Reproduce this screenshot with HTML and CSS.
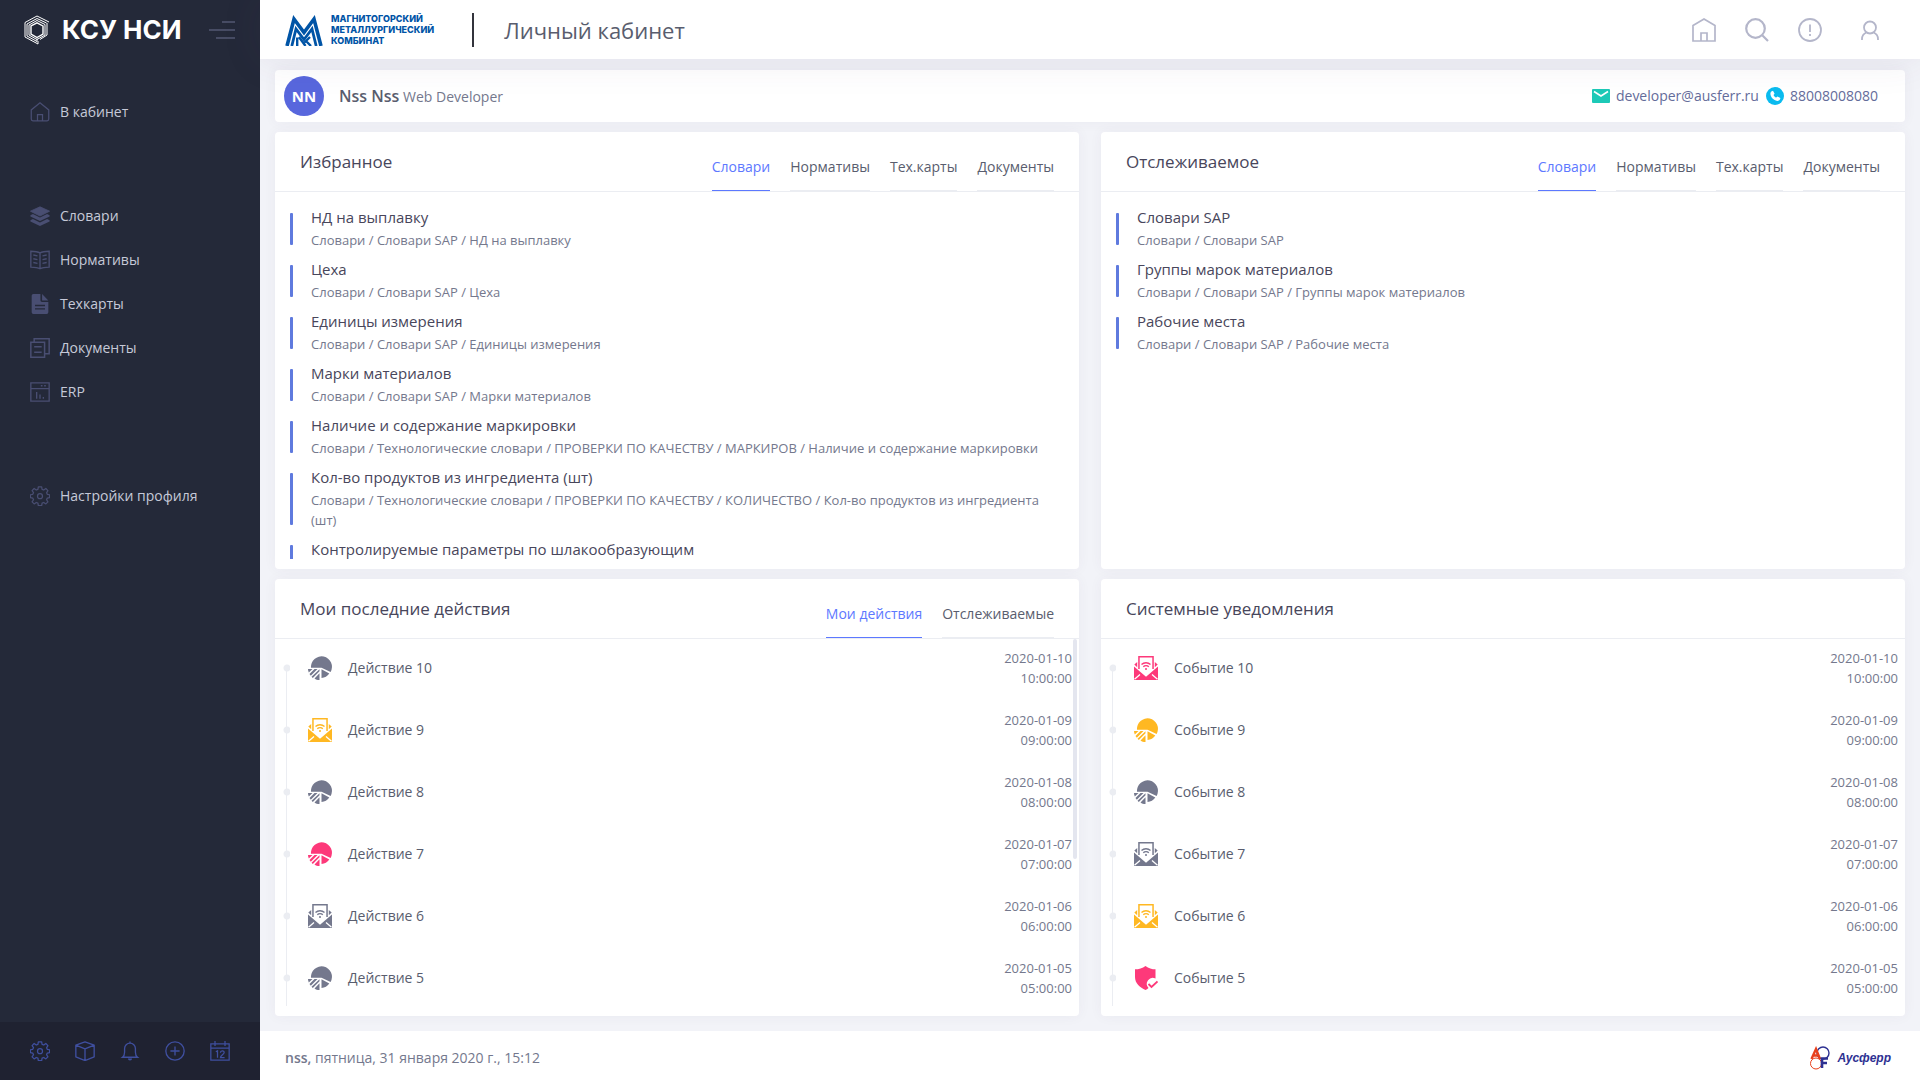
FILE: index.html
```
<!DOCTYPE html>
<html lang="ru">
<head>
<meta charset="utf-8">
<meta name="viewport" content="width=device-width, initial-scale=1">
<title>Личный кабинет</title>
<link rel="stylesheet" href="styles.css">
</head>
<body>
<svg class="sprite" aria-hidden="true">
  <symbol id="i-home" viewBox="0 0 24 24"><path d="M1 23V7.500L12 1l11 6.500V23zM9 23v-8h6v8" fill="none" stroke="currentColor" stroke-width="1.700"/></symbol>
  <symbol id="i-home-round" viewBox="0 0 24 24"><path d="M1.500 20.500V9.500L12 1l10.500 8.500v11a2 2 0 0 1-2 2h-17a2 2 0 0 1-2-2zM9 22.500V15h6v7.500" fill="none" stroke="currentColor" stroke-width="1.500"/></symbol>
  <symbol id="i-layers" viewBox="0 0 24 24"><g fill="currentColor"><path d="M12 1l11.500 5.200L12 12 .5 6.200z" stroke="currentColor" stroke-linejoin="round"/><path d="M.5 11l3-1.300L12 13.800l8.500-4.100 3 1.300v1.500L12 18 .5 12.500z"/><path d="M.5 17l3-1.300 8.500 4.100 8.500-4.100 3 1.300v1.500L12 24 .5 18.500z"/></g></symbol>
  <symbol id="i-book" viewBox="0 0 24 24"><g fill="none" stroke="currentColor" stroke-width="1.600"><path d="M12 3.500C9.500 2 6 1.500 1 1.500v19c5 0 8.500.5 11 2 2.500-1.500 6-2 11-2v-19c-5 0-8.500.5-11 2zM12 3.500v19"/><path d="M4 6l5 1M4 10.500l5 1M4 15l5 1M20 6l-5 1M20 10.500l-5 1M20 15l-5 1"/></g></symbol>
  <symbol id="i-file" viewBox="0 0 24 24"><path fill="currentColor" fill-rule="evenodd" d="M4 0h8.500v7.500A2 2 0 0 0 14.500 9.500H22V22a2 2 0 0 1-2 2H4a2 2 0 0 1-2-2V2a2 2 0 0 1 2-2zM6 13v1.700h12V13zm0 4v1.700h12V17zM14.500 0L22 7.700h-7.500z"/></symbol>
  <symbol id="i-docs" viewBox="0 0 24 24"><path d="M1 5h16.500v18H1zM5 5V1h18v18h-5.500M5 10.500h9M5 17h9" fill="none" stroke="currentColor" stroke-width="1.800"/></symbol>
  <symbol id="i-erp" viewBox="0 0 24 24"><path d="M1 1h22v22H1zM1 8h22M8 12v8M12 15v5M16 18v2M13 4.500h2M17 4.500h2" fill="none" stroke="currentColor" stroke-width="1.600"/></symbol>
  <symbol id="i-gear" viewBox="0 0 24 24"><g fill="none" stroke="currentColor" stroke-width="1.500" stroke-linejoin="round"><path d="M10 1h4l.5 3 2 .8L19 3l2.500 2.500-1.600 2.700.8 1.800 2.800.5v3.500l-2.800.5-.8 2 1.600 2.500L19 21.500l-2.500-1.700-2 .8L14 23.500h-4l-.5-2.900-2-.8L5 21.500 2.500 19l1.700-2.500-.9-2L.5 14v-3.500l2.800-.5.9-2-1.700-2.500L5 3l2.500 1.800 2-.8z"/><circle cx="12" cy="12.200" r="3"/></g></symbol>
  <symbol id="i-box" viewBox="0 0 24 24"><path d="M12 1l11 4v14l-11 4.500L1 19V5zM1 5l11 4.500L23 5M12 9.500v14" fill="none" stroke="currentColor" stroke-width="1.600" stroke-linejoin="round"/></symbol>
  <symbol id="i-bell" viewBox="0 0 24 24"><path d="M12 .5v2M3 19.500c2-1.500 2.500-3 2.500-6V9a6.500 6.500 0 0 1 13 0v4.500c0 3 .5 4.500 2.500 6z" fill="none" stroke="currentColor" stroke-width="1.600"/><path d="M9.500 21h5a2.500 2.500 0 0 1-5 0z" fill="currentColor"/></symbol>
  <symbol id="i-plus" viewBox="0 0 24 24"><path d="M12 6.500v11M6.500 12h11M12 1a11 11 0 1 1 0 22 11 11 0 0 1 0-22z" fill="none" stroke="currentColor" stroke-width="1.600"/></symbol>
  <symbol id="i-calendar" viewBox="0 0 24 24"><path d="M1 3.500h22V23H1zM1 8.500h22M6 0v6M18 0v6M7 13l2-1.200V20M12.500 14c0-3 4.500-3 4.500-.2 0 2-4.500 3.700-4.500 6.200H17.500" fill="none" stroke="currentColor" stroke-width="1.500"/></symbol>
  <symbol id="i-search" viewBox="0 0 24 24"><path d="M10.500 1.200a9.300 9.300 0 1 1 0 18.600 9.300 9.300 0 0 1 0-18.600zM17 17l6 6" fill="none" stroke="currentColor" stroke-width="2.200"/></symbol>
  <symbol id="i-alert" viewBox="0 0 24 24"><path d="M12 1a11 11 0 1 1 0 22 11 11 0 0 1 0-22zM12 6.500v7.500M12 16v2" fill="none" stroke="currentColor" stroke-width="1.800"/></symbol>
  <symbol id="i-user" viewBox="0 0 24 24"><path d="M12 3.500a6 6 0 1 1 0 12 6 6 0 0 1 0-12zM4 22v-1a7 7 0 0 1 4.500-6.500M20 22v-1a7 7 0 0 0-4.500-6.500" fill="none" stroke="currentColor" stroke-width="1.800"/></symbol>
  <symbol id="i-mail" viewBox="0 0 18 14"><rect width="18" height="14" rx="1" fill="#1dc9b7"/><path d="M2 2.500l7 4.500 7-4.500" fill="none" stroke="#fff" stroke-width="1.600"/></symbol>
  <symbol id="i-phone" viewBox="0 0 18 18"><circle cx="9" cy="9" r="9" fill="#0abbef"/><path d="M5.300 4.500l1.700-.8 1.600 3-1.100 1.200c.5 1.200 1.400 2.100 2.700 2.600l1.200-1.100 3 1.600c-.2 1.800-1.500 3-3.200 2.900C7.600 13.400 4.600 10.300 4.400 6.500c0-.8.300-1.500.9-2z" fill="#fff"/></symbol>
  <symbol id="i-chart" viewBox="0 0 24 24"><g fill="currentColor"><path d="M3 11.700A10.500 10.500 0 1 1 22.600 16L13.500 11.700z"/><path d="M13.500 13.300l7.800 4.200A10.500 10.500 0 0 1 13.500 22z"/><path d="M0 13h4.500L.8 16.600A10 10 0 0 1 0 13zM6.500 13h3L2.800 19.700 1.500 18zM11.500 13.200v2L4.800 21.900 3.500 20.700zM11.500 17.200V24c-2 0-3.600-.5-5-1.500z"/></g></symbol>
  <symbol id="i-letter" viewBox="0 0 24 24"><g fill="currentColor"><path d="M4.200 0h15.600v13h-1.500V1.500H5.700V13H4.200z"/><path d="M.3 8.600L3.200 6v5.200zM23.700 8.600L20.800 6v5.200zM0 10.500l12 10.300 12-10.300V24H0z"/></g><path d="M.5 23.200l5.500-4.700M23.500 23.200L18 18.500" stroke="#fff" stroke-width="1.300"/><path d="M7.500 8.500c2.500-2.300 6.500-2.300 9 0M9.300 10.800c1.500-1.400 4-1.400 5.500 0" fill="none" stroke="currentColor" stroke-width="1.400"/><circle cx="12" cy="13" r="1" fill="currentColor"/></symbol>
  <symbol id="i-shield" viewBox="0 0 24 24"><path d="M11.500 0c3 2.500 6.500 3.300 10 3.300v9.200a6 6 0 0 0-7 9.500c-1 .9-2 1.500-3 2C6 21.500 1 17.500 1 11V3.300C4.800 3.300 8.500 2.500 11.500 0z" fill="currentColor"/><path d="M14.500 18l3 3 6-5.500" fill="none" stroke="currentColor" stroke-width="1.800"/></symbol>
</svg>

<div class="app">
  <aside class="sidebar">
    <div class="brand">
      <a class="brand-link" href="#">
        <svg class="brand-mark" viewBox="0 0 26 30" aria-hidden="true"><g fill="none" stroke="#fff"><path d="M25 7L13 1 1 7.500V22l13 7v-3"/><path d="M22.500 8L13 3.500 3 9v12l10 5.500v-3" /><path d="M23 8v12l-7 4.500" /><path d="M21 9.500L13 5.500 5 10v10l8 4.500 8-4.500z"/><path d="M19 11l-6-3.200L7 11v8l6 3.500 6-3.500z" stroke-width="1.400"/></g></svg>
        <span class="brand-name">КСУ НСИ</span>
      </a>
      <button class="toggle" type="button" aria-label="Свернуть меню"><span></span><span></span><span></span></button>
    </div>
    <nav class="menu">
      <ul class="menu-group">
        <li><a href="#"><svg><use href="#i-home-round"/></svg>В кабинет</a></li>
      </ul>
      <ul class="menu-group">
        <li><a href="#"><svg><use href="#i-layers"/></svg>Словари</a></li>
        <li><a href="#"><svg><use href="#i-book"/></svg>Нормативы</a></li>
        <li><a href="#"><svg><use href="#i-file"/></svg>Техкарты</a></li>
        <li><a href="#"><svg><use href="#i-docs"/></svg>Документы</a></li>
        <li><a href="#"><svg><use href="#i-erp"/></svg>ERP</a></li>
      </ul>
      <ul class="menu-group">
        <li><a href="#"><svg><use href="#i-gear"/></svg>Настройки профиля</a></li>
      </ul>
    </nav>
    <div class="shortcuts">
      <button type="button" aria-label="Настройки"><svg><use href="#i-gear"/></svg></button>
      <button type="button" aria-label="Пакеты"><svg><use href="#i-box"/></svg></button>
      <button type="button" aria-label="Уведомления"><svg><use href="#i-bell"/></svg></button>
      <button type="button" aria-label="Добавить"><svg><use href="#i-plus"/></svg></button>
      <button type="button" aria-label="Календарь"><svg><use href="#i-calendar"/></svg></button>
    </div>
  </aside>

  <div class="page">
    <header class="topbar">
      <a class="company" href="#">
        <svg class="company-mark" viewBox="0 0 38 32" aria-hidden="true"><g fill="none" stroke="#0054a6"><path d="M2 32L9 5l10 13.500L29 5l7 27" stroke-width="3.600"/><path d="M6.800 32L11 15l8 10.500L27 15l4.200 17" stroke-width="2.800"/><path d="M12.200 32v-8.500M14 23l6.500 9M25 23l-5.500 5.500M21 27l5 5" stroke-width="2.400"/></g></svg>
        <span class="company-name">Магнитогорский<br>металлургический<br>комбинат</span>
      </a>
      <h1 class="page-title">Личный кабинет</h1>
      <div class="tools">
        <button type="button" aria-label="Домой"><svg><use href="#i-home"/></svg></button>
        <button type="button" aria-label="Поиск"><svg><use href="#i-search"/></svg></button>
        <button type="button" aria-label="Сообщения"><svg><use href="#i-alert"/></svg></button>
        <button class="tool-user" type="button" aria-label="Профиль"><svg><use href="#i-user"/></svg></button>
      </div>
    </header>

    <main class="content">
      <section class="card profile">
        <span class="avatar">NN</span>
        <p class="person"><strong>Nss Nss</strong> Web Developer</p>
        <div class="contacts">
          <a href="mailto:developer@ausferr.ru"><svg class="mail"><use href="#i-mail"/></svg>developer@ausferr.ru</a>
          <a href="tel:88008008080"><svg><use href="#i-phone"/></svg>88008008080</a>
        </div>
      </section>

      <div class="board">
        <section class="card panel">
          <header class="panel-head">
            <h2>Избранное</h2>
            <div class="tabs" role="tablist">
              <button role="tab" aria-selected="true">Словари</button>
              <button role="tab" aria-selected="false">Нормативы</button>
              <button role="tab" aria-selected="false">Тех.карты</button>
              <button role="tab" aria-selected="false">Документы</button>
            </div>
          </header>
          <ul class="links">
            <li><div><a href="#">НД на выплавку</a><p>Словари / Словари SAP / НД на выплавку</p></div></li>
            <li><div><a href="#">Цеха</a><p>Словари / Словари SAP / Цеха</p></div></li>
            <li><div><a href="#">Единицы измерения</a><p>Словари / Словари SAP / Единицы измерения</p></div></li>
            <li><div><a href="#">Марки материалов</a><p>Словари / Словари SAP / Марки материалов</p></div></li>
            <li><div><a href="#">Наличие и содержание маркировки</a><p>Словари / Технологические словари / ПРОВЕРКИ ПО КАЧЕСТВУ / МАРКИРОВ / Наличие и содержание маркировки</p></div></li>
            <li><div><a href="#">Кол-во продуктов из ингредиента (шт)</a><p>Словари / Технологические словари / ПРОВЕРКИ ПО КАЧЕСТВУ / КОЛИЧЕСТВО / Кол-во продуктов из ингредиента (шт)</p></div></li>
            <li><div><a href="#">Контролируемые параметры по шлакообразующим</a></div></li>
          </ul>
        </section>

        <section class="card panel">
          <header class="panel-head">
            <h2>Отслеживаемое</h2>
            <div class="tabs" role="tablist">
              <button role="tab" aria-selected="true">Словари</button>
              <button role="tab" aria-selected="false">Нормативы</button>
              <button role="tab" aria-selected="false">Тех.карты</button>
              <button role="tab" aria-selected="false">Документы</button>
            </div>
          </header>
          <ul class="links">
            <li><div><a href="#">Словари SAP</a><p>Словари / Словари SAP</p></div></li>
            <li><div><a href="#">Группы марок материалов</a><p>Словари / Словари SAP / Группы марок материалов</p></div></li>
            <li><div><a href="#">Рабочие места</a><p>Словари / Словари SAP / Рабочие места</p></div></li>
          </ul>
        </section>

        <section class="card panel">
          <header class="panel-head">
            <h2>Мои последние действия</h2>
            <div class="tabs" role="tablist">
              <button role="tab" aria-selected="true">Мои действия</button>
              <button role="tab" aria-selected="false">Отслеживаемые</button>
            </div>
          </header>
          <ol class="timeline">
            <li><i class="marker"></i><svg class="grey"><use href="#i-chart"/></svg><span>Действие 10</span><time>2020-01-10<br>10:00:00</time></li>
            <li><i class="marker"></i><svg class="amber"><use href="#i-letter"/></svg><span>Действие 9</span><time>2020-01-09<br>09:00:00</time></li>
            <li><i class="marker"></i><svg class="grey"><use href="#i-chart"/></svg><span>Действие 8</span><time>2020-01-08<br>08:00:00</time></li>
            <li><i class="marker"></i><svg class="red"><use href="#i-chart"/></svg><span>Действие 7</span><time>2020-01-07<br>07:00:00</time></li>
            <li><i class="marker"></i><svg class="grey"><use href="#i-letter"/></svg><span>Действие 6</span><time>2020-01-06<br>06:00:00</time></li>
            <li><i class="marker"></i><svg class="grey"><use href="#i-chart"/></svg><span>Действие 5</span><time>2020-01-05<br>05:00:00</time></li>
          </ol>
          <div class="scroll-track"><div class="scroll-thumb"></div></div>
        </section>

        <section class="card panel">
          <header class="panel-head">
            <h2>Системные уведомления</h2>
          </header>
          <ol class="timeline">
            <li><i class="marker"></i><svg class="red"><use href="#i-letter"/></svg><span>Событие 10</span><time>2020-01-10<br>10:00:00</time></li>
            <li><i class="marker"></i><svg class="amber"><use href="#i-chart"/></svg><span>Событие 9</span><time>2020-01-09<br>09:00:00</time></li>
            <li><i class="marker"></i><svg class="grey"><use href="#i-chart"/></svg><span>Событие 8</span><time>2020-01-08<br>08:00:00</time></li>
            <li><i class="marker"></i><svg class="grey"><use href="#i-letter"/></svg><span>Событие 7</span><time>2020-01-07<br>07:00:00</time></li>
            <li><i class="marker"></i><svg class="amber"><use href="#i-letter"/></svg><span>Событие 6</span><time>2020-01-06<br>06:00:00</time></li>
            <li><i class="marker"></i><svg class="red"><use href="#i-shield"/></svg><span>Событие 5</span><time>2020-01-05<br>05:00:00</time></li>
          </ol>
        </section>
      </div>
    </main>

    <footer class="footer">
      <p><strong>nss,</strong> пятница, 31 января 2020 г., 15:12</p>
      <a class="vendor" href="#">
        <svg viewBox="0 0 20 24" aria-hidden="true"><circle cx="13" cy="7" r="6" fill="none" stroke="#2e3192" stroke-width="1.400"/><circle cx="6" cy="17.500" r="5.500" fill="#fff" stroke="#e8401c"/><path d="M1.500 13L6 3l4 10M3.500 9.500h5" fill="none" stroke="#e8401c" stroke-width="2.400"/><path d="M12 22V12.500h6M12 17h5" fill="none" stroke="#2e3192" stroke-width="2.600"/></svg>
        <span>Аусферр</span>
      </a>
    </footer>
  </div>
</div>
</body>
</html>
```
FILE: styles.css
```
*, *::before, *::after { box-sizing: border-box; }

body {
  margin: 0;
  font: 400 14px/20px "Open Sans", "Noto Sans", sans-serif;
  color: #646c9a;
  background: #f2f3f8;
}

h1, h2, p, ul, ol { margin: 0; padding: 0; font-weight: 400; }
ul, ol { list-style: none; }
a { color: inherit; text-decoration: none; }
button { margin: 0; padding: 0; border: 0; background: none; font: inherit; color: inherit; cursor: pointer; }
svg { display: block; flex: none; }
.sprite { display: none; }

.app { display: grid; grid-template: minmax(0, 1fr) / 260px minmax(0, 1fr); height: 100vh; }

/* Sidebar */
.sidebar { display: flex; flex-direction: column; background: #242939; color: #c6c9d8; }
.brand { display: flex; align-items: center; justify-content: space-between; height: 60px; padding: 0 25px 0 24px; }
.brand-link { display: flex; align-items: center; gap: 12px; }
.brand-mark { width: 26px; height: 30px; }
.brand-name { font: 700 26px/30px "Inter", "Open Sans", sans-serif; color: #fff; }
.toggle { display: flex; flex-direction: column; align-items: flex-end; gap: 6px; width: 26px; }
.toggle span { height: 2px; width: 13px; background: #474c64; }
.toggle span:nth-child(2) { width: 26px; }
.toggle span:nth-child(3) { width: 19px; }

.menu { display: flex; flex-direction: column; flex: 1; gap: 60px; padding-top: 30px; }
.menu a { display: flex; align-items: center; gap: 10px; height: 44px; padding: 0 30px; }
.menu svg { width: 20px; height: 20px; color: #494e72; }

.shortcuts { display: flex; align-items: center; gap: 25px; height: 58px; padding: 0 30px; background: #1f2231; color: #3f4f9f; }
.shortcuts svg { width: 20px; height: 20px; }

/* Top bar */
.page { display: flex; flex-direction: column; min-width: 0; min-height: 0; }
.topbar { display: flex; align-items: center; height: 59px; flex: none; padding: 0 38px 0 25px; background: #fff; box-shadow: 0 0 40px rgba(82, 63, 105, .1); position: relative; z-index: 1; }
.company { display: flex; align-items: center; gap: 8px; }
.company-mark { width: 38px; height: 32px; }
.company-name { font: 800 9px/11px "Inter", "Open Sans", sans-serif; text-transform: uppercase; color: #0054a6; }
.page-title { margin-left: 38px; padding-left: 30px; border-left: 2px solid #33343c; font-size: 22px; line-height: 34px; color: #595d6e; }
.tools { display: flex; align-items: center; gap: 29px; margin-left: auto; color: #b4b6ca; }
.tools svg { width: 24px; height: 24px; }
.tool-user { margin-left: 7px; }

/* Content */
.content { display: flex; flex-direction: column; flex: 1; gap: 10px; min-height: 0; padding: 11px 15px 15px; }
.card { background: #fff; border-radius: 4px; box-shadow: 0 0 13px rgba(82, 63, 105, .05); }

.profile { display: flex; align-items: center; height: 52px; flex: none; padding: 0 27px 0 9px; }
.avatar { width: 40px; height: 40px; border-radius: 50%; background: #5867dd; color: #fff; font-size: 15px; font-weight: 700; line-height: 40px; text-align: center; }
.person { margin-left: 15px; color: #74788d; }
.person strong { font-size: 16px; font-weight: 600; color: #595d6e; }
.contacts { display: flex; gap: 7px; margin-left: auto; }
.contacts a { display: flex; align-items: center; gap: 6px; }
.contacts svg { width: 18px; height: 18px; }
.contacts .mail { height: 14px; }

.board { display: grid; grid-template: repeat(2, minmax(0, 1fr)) / repeat(2, minmax(0, 1fr)); flex: 1; gap: 10px 22px; min-height: 0; }
.panel { position: relative; display: flex; flex-direction: column; min-height: 0; }
.panel-head { display: flex; justify-content: space-between; height: 60px; flex: none; padding: 0 25px; border-bottom: 1px solid #ebedf2; }
.panel-head h2 { font-size: 17px; font-weight: 500; line-height: 60px; color: #48465b; }
.tabs { display: flex; gap: 20px; color: #595d6e; }
.tabs button { padding-top: 12px; border-bottom: 1px solid #ebedf2; }
.tabs [aria-selected="true"] { color: #5d78ff; border-color: #5d78ff; }

/* Bookmarked entries */
.links { display: flex; flex-direction: column; flex: 1; gap: 8px; min-height: 0; margin-bottom: 10px; padding: 14px 20px 0 15px; overflow: hidden; }
.links li { display: flex; flex: none; gap: 18px; min-height: 44px; }
.links li::before { content: ""; width: 3px; margin: 7px 0 5px; border-radius: 1px; background: #5f7ade; }
.links li div { flex: 1; min-width: 0; }
.links a { display: block; margin-bottom: 2px; font-size: 15px; font-weight: 500; line-height: 22px; color: #48465b; }
.links p { font-size: 13px; color: #74788d; }

/* Event feeds */
.timeline { flex: 1; min-height: 0; margin-bottom: 10px; padding: 9px 7px 0 8px; overflow: hidden; }
.timeline li { display: flex; height: 62px; line-height: 40px; color: #595d6e; }
.marker { display: flex; flex-direction: column; align-items: center; width: 7px; margin-right: 18px; background: radial-gradient(circle at 4px 20px, #ebedf2 3px, transparent 4px); }
.marker::before { content: ""; width: 1px; height: 20px; }
.marker::after { content: ""; width: 1px; flex: 1; background: #ebedf2; }
.timeline li + li .marker::before { background: #ebedf2; }
.timeline svg { width: 24px; height: 24px; margin: 8px 16px 0 0; }
.timeline time { margin-left: auto; font-size: 13px; line-height: 20px; text-align: right; color: #74788d; }
.grey { color: #74788d; }
.amber { color: #ffb822; }
.red { color: #fd397a; }

.scroll-track { position: absolute; top: 60px; right: 2px; bottom: 10px; width: 4px; }
.scroll-thumb { height: 60%; border-radius: 2px; background: #e4e6ef; }

/* Footer */
.footer { display: flex; align-items: center; justify-content: space-between; height: 49px; flex: none; padding: 5px 29px 0 25px; background: #fff; color: #74788d; }
.footer strong { font-weight: 600; }
.vendor { display: flex; align-items: center; gap: 7px; font: italic 700 12px/20px "Liberation Sans", sans-serif; color: #2e3192; }
.vendor svg { width: 20px; height: 24px; }
```
